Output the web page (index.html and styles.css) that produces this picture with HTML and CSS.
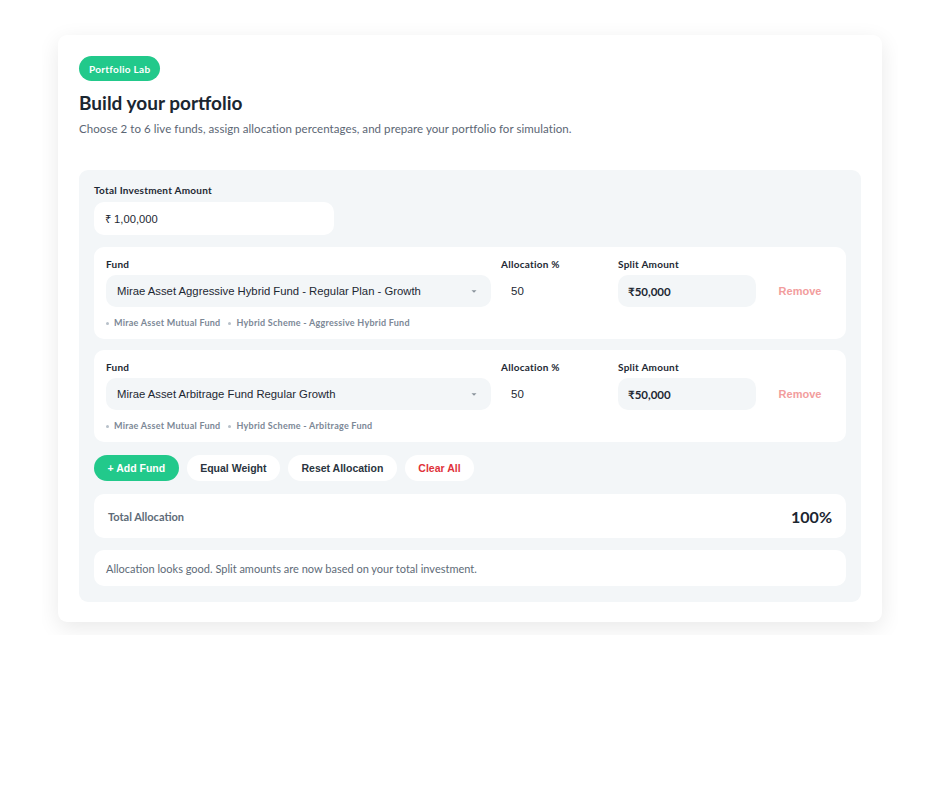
FILE: index.html
```html
<!DOCTYPE html>
<html>
<head>
<meta charset="utf-8">
<link rel="stylesheet" href="styles.css">
</head>
<body>
<div class="frame">
  <div class="card">
    <span class="badge">Portfolio Lab</span>
    <h1 class="title">Build your portfolio</h1>
    <p class="subtitle">Choose 2 to 6 live funds, assign allocation percentages, and prepare your portfolio for simulation.</p>

    <div class="panel">
      <div class="total">
        <label class="label">Total Investment Amount</label>
        <div class="amount-input">₹ 1,00,000</div>
      </div>

      <div class="fund-row">
        <div class="grid">
          <label class="label">Fund</label>
          <label class="label">Allocation %</label>
          <label class="label">Split Amount</label>
          <span></span>
          <div class="select"><span>Mirae Asset Aggressive Hybrid Fund - Regular Plan - Growth</span><svg class="caret" width="8" height="5" viewBox="0 0 8 5"><path d="M1.5 1.2h5L4 3.8z" fill="#8a939c"/></svg></div>
          <div class="alloc">50</div>
          <div class="split">₹50,000</div>
          <div class="remove">Remove</div>
        </div>
        <div class="meta"><span class="dot"></span>Mirae Asset Mutual Fund<span class="dot second"></span>Hybrid Scheme - Aggressive Hybrid Fund</div>
      </div>

      <div class="fund-row">
        <div class="grid">
          <label class="label">Fund</label>
          <label class="label">Allocation %</label>
          <label class="label">Split Amount</label>
          <span></span>
          <div class="select"><span>Mirae Asset Arbitrage Fund Regular Growth</span><svg class="caret" width="8" height="5" viewBox="0 0 8 5"><path d="M1.5 1.2h5L4 3.8z" fill="#8a939c"/></svg></div>
          <div class="alloc">50</div>
          <div class="split">₹50,000</div>
          <div class="remove">Remove</div>
        </div>
        <div class="meta"><span class="dot"></span>Mirae Asset Mutual Fund<span class="dot second"></span>Hybrid Scheme - Arbitrage Fund</div>
      </div>

      <div class="actions">
        <button class="btn btn-primary">+ Add Fund</button>
        <button class="btn">Equal Weight</button>
        <button class="btn">Reset Allocation</button>
        <button class="btn btn-danger">Clear All</button>
      </div>

      <div class="summary">
        <span class="summary-label">Total Allocation</span>
        <span class="summary-value">100%</span>
      </div>

      <div class="message">Allocation looks good. Split amounts are now based on your total investment.</div>
    </div>
  </div>
</div>
</body>
</html>
```

FILE: styles.css
```css
* { box-sizing: border-box; }
html, body { margin: 0; padding: 0; background: #ffffff; }
body {
  font-family: "Lato", "Noto Sans", sans-serif;
  color: #1d2833;
}
.frame {
  margin: 17px 0 0 42px;
  width: 856px;
  height: 618px;
  overflow: hidden;
  padding: 18px 16px 0 16px;
}
.card {
  background: #ffffff;
  border-radius: 9px;
  box-shadow: 0 6px 22px rgba(0, 0, 0, 0.09);
  height: 587px;
  padding: 21px 21px 20px 21px;
}
.badge {
  display: inline-flex;
  align-items: center;
  height: 25px;
  padding: 0 10px;
  border-radius: 13px;
  background: #22c98b;
  color: #ffffff;
  font-size: 10px;
  font-weight: 700;
  letter-spacing: 0.3px;
}
.title {
  margin: 10px 0 0 0;
  font-size: 19px;
  line-height: 24px;
  font-weight: 700;
  color: #1b2631;
}
.subtitle {
  margin: 6px 0 0 0;
  font-size: 11.5px;
  line-height: 16px;
  letter-spacing: 0.06px;
  color: #5b6674;
}
.panel {
  margin-top: 33px;
  background: #f3f6f8;
  border-radius: 9px;
  padding: 14px 15px 16px 15px;
  display: flex;
  flex-direction: column;
}
.label {
  display: block;
  font-size: 10px;
  line-height: 12px;
  font-weight: 700;
  letter-spacing: 0.25px;
  color: #1d2833;
}
.total .label { margin-bottom: 6px; }
.amount-input {
  width: 240px;
  height: 33px;
  background: #ffffff;
  border-radius: 10px;
  padding: 0 11px;
  display: flex;
  align-items: center;
  font-family: "Liberation Sans", Arial, sans-serif;
  font-size: 11.2px;
  color: #1d2833;
}
.fund-row {
  margin-top: 12px;
  background: #ffffff;
  border-radius: 10px;
  padding: 11px 12px 10px 12px;
}
.fund-row + .fund-row { margin-top: 11px; }
.grid {
  display: grid;
  grid-template-columns: 385px 107px 138px 68px;
  column-gap: 10px;
  row-gap: 5px;
  align-items: center;
}
.select {
  height: 32px;
  background: #f3f6f8;
  border-radius: 10px;
  padding: 0 11px;
  display: flex;
  align-items: center;
  justify-content: space-between;
  font-family: "Liberation Sans", Arial, sans-serif;
  font-size: 11.3px;
  color: #1d2833;
}
.caret { margin-right: 2px; }
.alloc {
  height: 32px;
  display: flex;
  align-items: center;
  padding-left: 10px;
  font-family: "Liberation Sans", Arial, sans-serif;
  font-size: 11.5px;
  color: #1d2833;
}
.split {
  height: 32px;
  background: #f3f6f8;
  border-radius: 10px;
  padding: 0 10px;
  display: flex;
  align-items: center;
  font-size: 11.5px;
  font-weight: 700;
  color: #1d2833;
}
.remove {
  text-align: center;
  font-family: "Liberation Sans", Arial, sans-serif;
  font-size: 11px;
  font-weight: 700;
  color: #f29d9d;
}
.meta {
  margin-top: 10px;
  font-size: 9px;
  line-height: 12px;
  font-weight: 700;
  letter-spacing: 0.25px;
  color: #7c8896;
  display: flex;
  align-items: center;
}
.dot {
  width: 3px;
  height: 3px;
  border-radius: 50%;
  background: #b7c0c9;
  margin-right: 5px;
}
.dot.second { margin-left: 8px; }
.actions {
  margin-top: 13px;
  display: flex;
  gap: 8px;
}
.btn {
  height: 26px;
  border: none;
  border-radius: 13px;
  background: #ffffff;
  padding: 0 13.5px;
  font-family: "Liberation Sans", Arial, sans-serif;
  font-size: 10.5px;
  font-weight: 700;
  color: #2a3440;
}
.btn-primary { background: #22c98b; color: #ffffff; }
.btn-danger { color: #e0323a; }
.summary {
  margin-top: 13px;
  height: 44px;
  background: #ffffff;
  border-radius: 10px;
  padding: 0 14px;
  display: flex;
  align-items: center;
  justify-content: space-between;
}
.summary-label {
  font-size: 11px;
  font-weight: 700;
  color: #5e6b78;
}
.summary-value {
  font-size: 16px;
  font-weight: 700;
  color: #1b2631;
}
.message {
  margin-top: 12px;
  height: 36px;
  background: #ffffff;
  border-radius: 10px;
  padding: 0 12px;
  display: flex;
  align-items: center;
  font-size: 11px;
  color: #5e6b78;
}
```
